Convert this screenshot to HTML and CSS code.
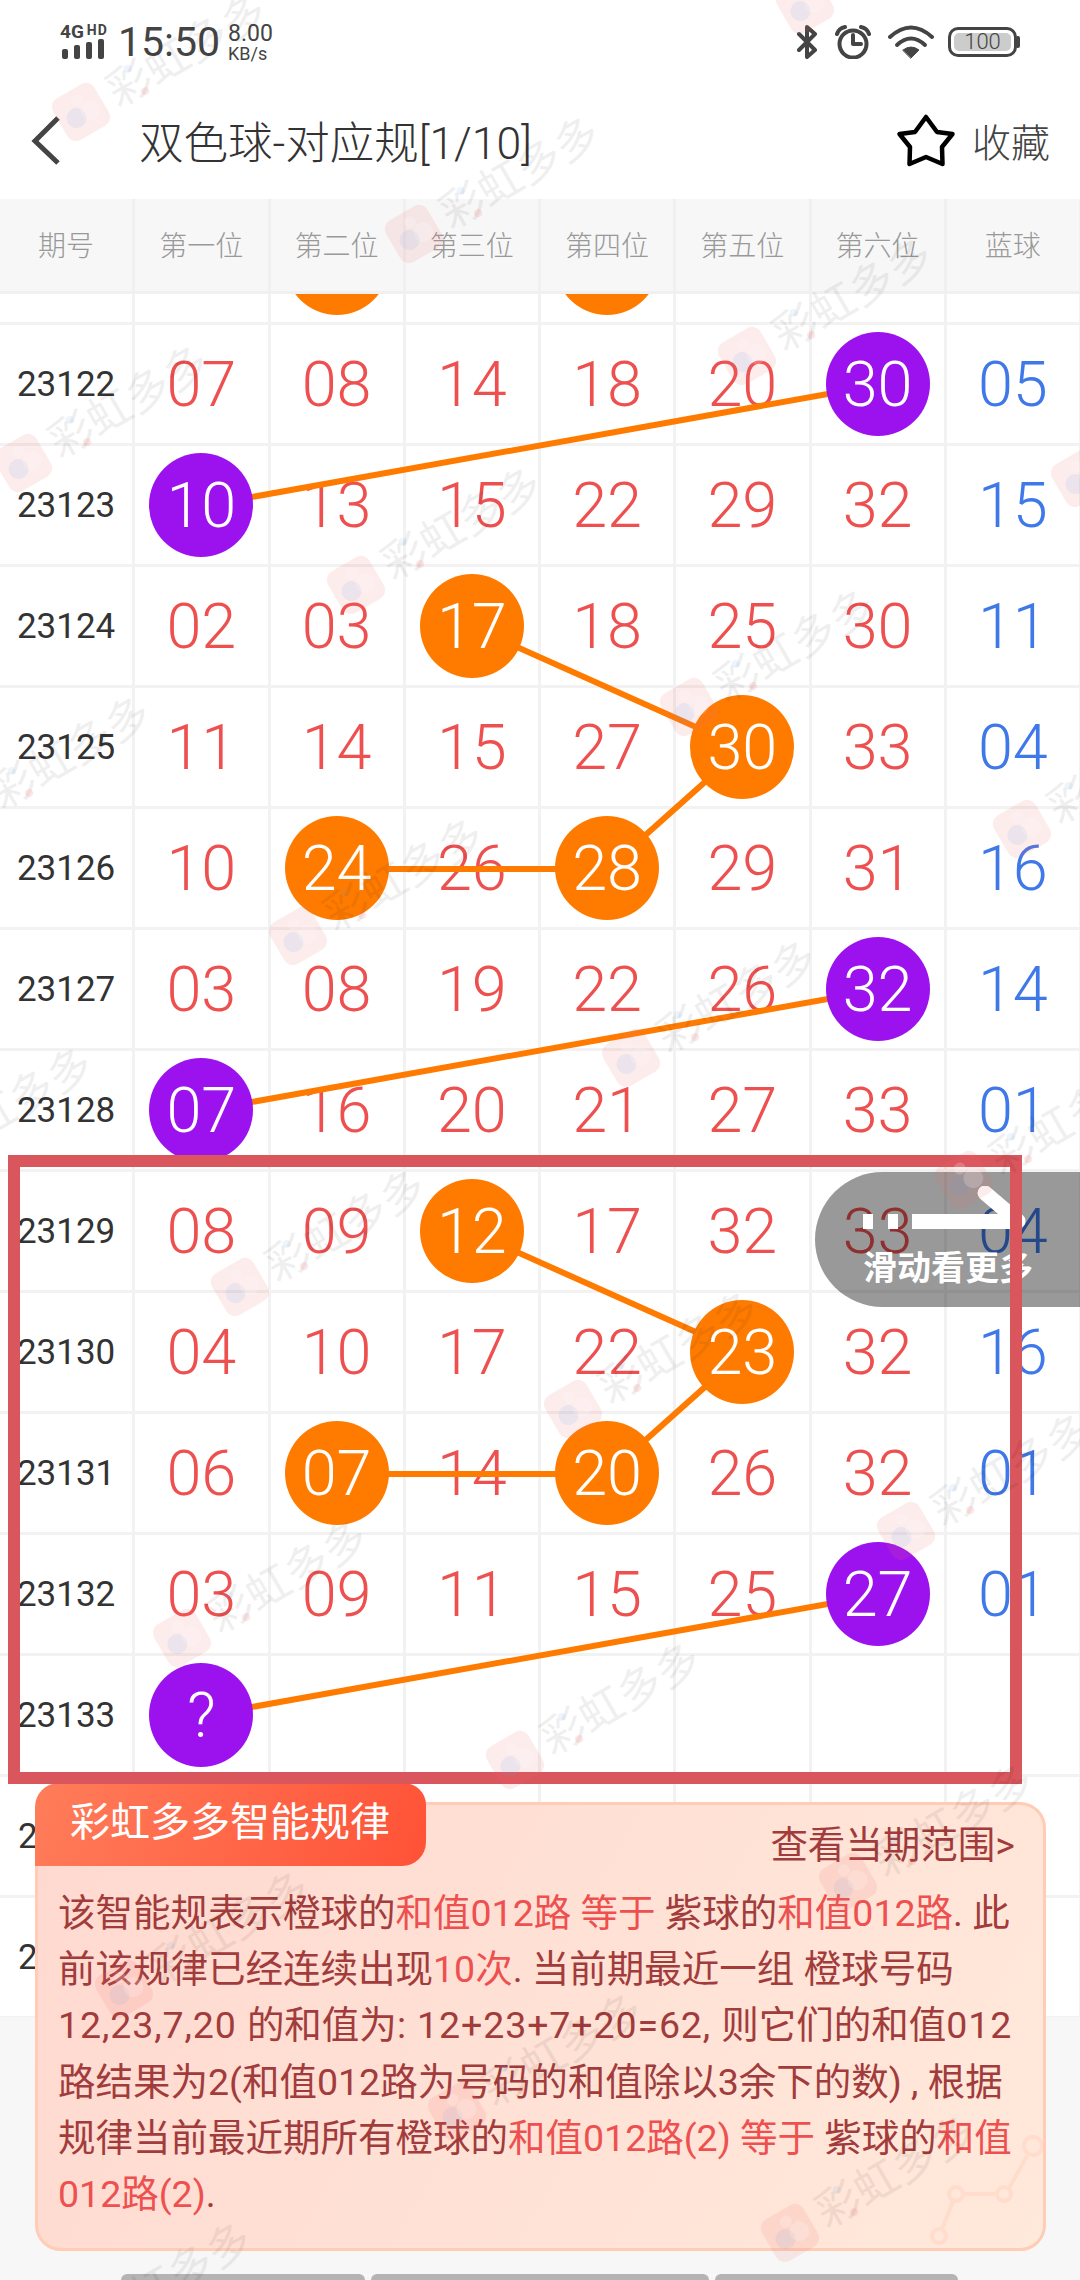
FILE: index.html
```html
<!DOCTYPE html>
<html lang="zh-CN">

<head>
    <meta charset="UTF-8">
    <meta name="viewport" content="width=device-width, initial-scale=1.0">
    <title>双色球-对应规</title>
    <link rel="stylesheet" href="styles.css">
</head>

<body>
    <div class="page">
        <!-- status bar -->
        <div class="status">
            <div class="net">
                <div class="net-label"><span class="net-4g">4G</span><span class="net-hd">HD</span></div>
                <div class="bars"><i class="b1"></i><i class="b2"></i><i class="b3"></i><i class="b4"></i></div>
            </div>
            <span class="clock">15:50</span>
            <div class="speed"><span class="speed-num">8.00</span><span class="speed-unit">KB/s</span></div>
            <div class="status-right">
                <svg class="ic-bt" width="22" height="34" viewBox="0 0 22 34"><path d="M3 9L19 25L11 32V2L19 9L3 25"/></svg>
                <svg class="ic-alarm" width="36" height="34" viewBox="0 0 36 34"><circle cx="18" cy="19" r="13.5"/><path d="M18 10V19H26"/><path d="M2 9Q4 3 10 2"/><path d="M26 2Q32 3 34 9"/></svg>
                <svg class="ic-wifi" width="46" height="34" viewBox="0 0 46 34"><path d="M2 12Q23 -7 44 12"/><path d="M9 20Q23 7 37 20"/><path class="fill" d="M15 25Q23 19 31 25L23 33Z"/></svg>
                <div class="battery"><div class="battery-in">100</div></div>
                <div class="battery-nub"></div>
            </div>
        </div>

        <!-- title bar -->
        <div class="nav">
            <svg class="back" width="30" height="50" viewBox="0 0 30 50"><path d="M27 3L4 26L27 48"/></svg>
            <h1 class="nav-title">双色球-对应规[1/10]</h1>
            <svg class="star" width="60" height="56" viewBox="0 0 60 56"><path d="M30 5L41 20L56.500 22L46 35L46.500 52L30 45L13.500 52L14 35L3.500 22L19 20Z"/></svg>
            <span class="nav-fav">收藏</span>
        </div>

        <!-- table head -->
        <div class="grid thead">
            <div class="th">期号</div>
            <div class="th">第一位</div>
            <div class="th">第二位</div>
            <div class="th">第三位</div>
            <div class="th">第四位</div>
            <div class="th">第五位</div>
            <div class="th">第六位</div>
            <div class="th">蓝球</div>
        </div>

        <!-- table body, scrolled so the first row is cut off by the head -->
        <div class="tbody">
            <svg class="links" width="1080" height="1723" viewBox="0 294 1080 1723">
                <path d="M878 385L201.500 506"/>
                <path d="M472 627L743 748L607.500 869H337"/>
                <path d="M878 990L201.500 1111"/>
                <path d="M472 1232L743 1353L607.500 1474H337"/>
                <path d="M878 1595L201.500 1716"/>
            </svg>
            <div class="rows">
                <div class="grid row"><div class="cell"></div><div class="cell"></div><div class="cell"><span class="ball orange"></span></div><div class="cell"></div><div class="cell"><span class="ball orange"></span></div><div class="cell"></div><div class="cell"></div><div class="cell"></div></div>
                <div class="grid row"><div class="cell id">23122</div><div class="cell">07</div><div class="cell">08</div><div class="cell">14</div><div class="cell">18</div><div class="cell">20</div><div class="cell"><span class="ball purple">30</span></div><div class="cell blue">05</div></div>
                <div class="grid row"><div class="cell id">23123</div><div class="cell"><span class="ball purple">10</span></div><div class="cell">13</div><div class="cell">15</div><div class="cell">22</div><div class="cell">29</div><div class="cell">32</div><div class="cell blue">15</div></div>
                <div class="grid row"><div class="cell id">23124</div><div class="cell">02</div><div class="cell">03</div><div class="cell"><span class="ball orange">17</span></div><div class="cell">18</div><div class="cell">25</div><div class="cell">30</div><div class="cell blue">11</div></div>
                <div class="grid row"><div class="cell id">23125</div><div class="cell">11</div><div class="cell">14</div><div class="cell">15</div><div class="cell">27</div><div class="cell"><span class="ball orange">30</span></div><div class="cell">33</div><div class="cell blue">04</div></div>
                <div class="grid row"><div class="cell id">23126</div><div class="cell">10</div><div class="cell"><span class="ball orange">24</span></div><div class="cell">26</div><div class="cell"><span class="ball orange">28</span></div><div class="cell">29</div><div class="cell">31</div><div class="cell blue">16</div></div>
                <div class="grid row"><div class="cell id">23127</div><div class="cell">03</div><div class="cell">08</div><div class="cell">19</div><div class="cell">22</div><div class="cell">26</div><div class="cell"><span class="ball purple">32</span></div><div class="cell blue">14</div></div>
                <div class="grid row"><div class="cell id">23128</div><div class="cell"><span class="ball purple">07</span></div><div class="cell">16</div><div class="cell">20</div><div class="cell">21</div><div class="cell">27</div><div class="cell">33</div><div class="cell blue">01</div></div>
                <div class="grid row"><div class="cell id">23129</div><div class="cell">08</div><div class="cell">09</div><div class="cell"><span class="ball orange">12</span></div><div class="cell">17</div><div class="cell">32</div><div class="cell">33</div><div class="cell blue">04</div></div>
                <div class="grid row"><div class="cell id">23130</div><div class="cell">04</div><div class="cell">10</div><div class="cell">17</div><div class="cell">22</div><div class="cell"><span class="ball orange">23</span></div><div class="cell">32</div><div class="cell blue">16</div></div>
                <div class="grid row"><div class="cell id">23131</div><div class="cell">06</div><div class="cell"><span class="ball orange">07</span></div><div class="cell">14</div><div class="cell"><span class="ball orange">20</span></div><div class="cell">26</div><div class="cell">32</div><div class="cell blue">01</div></div>
                <div class="grid row"><div class="cell id">23132</div><div class="cell">03</div><div class="cell">09</div><div class="cell">11</div><div class="cell">15</div><div class="cell">25</div><div class="cell"><span class="ball purple">27</span></div><div class="cell blue">01</div></div>
                <div class="grid row"><div class="cell id">23133</div><div class="cell"><span class="ball purple">?</span></div><div class="cell"></div><div class="cell"></div><div class="cell"></div><div class="cell"></div><div class="cell"></div><div class="cell"></div></div>
                <div class="grid row"><div class="cell id cut">2</div><div class="cell"></div><div class="cell"></div><div class="cell"></div><div class="cell"></div><div class="cell"></div><div class="cell"></div><div class="cell"></div></div>
                <div class="grid row"><div class="cell id cut">2</div><div class="cell"></div><div class="cell"></div><div class="cell"></div><div class="cell"></div><div class="cell"></div><div class="cell"></div><div class="cell"></div></div>
            </div>
        </div>

        <!-- bottom strip -->
        <div class="foot">
            <div class="foot-bar w1"></div>
            <div class="foot-bar w2"></div>
            <div class="foot-bar w3"></div>
        </div>

        <!-- swipe hint -->
        <div class="swipe">
            <svg class="swipe-arrow" width="164" height="64" viewBox="0 0 164 64"><rect x="0" y="28" width="10" height="15"/><rect x="25" y="28" width="10" height="15"/><rect x="49" y="28" width="100" height="15"/><path d="M122 7L155 35"/></svg>
            <span class="swipe-text">滑动看更多</span>
        </div>

        <!-- rule explanation -->
        <div class="rule">
            <div class="rule-tag">彩虹多多智能规律</div>
            <svg class="rule-deco" width="120" height="120" viewBox="0 0 120 120"><circle cx="16" cy="102" r="7"/><circle cx="33" cy="60" r="7"/><circle cx="81" cy="60" r="7"/><circle cx="110" cy="12" r="9"/><path d="M19 95L30 67M40 60H74M86 54L104 22"/></svg>
            <div class="rule-link">查看当期范围&gt;</div>
            <p class="rule-text">该智能规表示橙球的<em>和值012路 等于</em> 紫球的<em>和值012路</em>. 此<br>前该规律已经连续出现<em>10次</em>. 当前期最近一组 橙球号码<br><span class="num">12,23,7,20 </span>的和值为<span class="num">: 12+23+7+20=62, </span>则它们的和值<span class="num">012</span><br>路结果为2(和值012路为号码的和值除以3余下的数) , 根据<br>规律当前最近期所有橙球的<em>和值012路(2) 等于</em> 紫球的<em>和值</em><br><em>012路(2)</em>.</p>
        </div>

        <!-- red marker drawn over the shot -->
        <div class="frame"></div>

        <!-- watermark -->
        <svg class="watermark" width="1080" height="2280" viewBox="0 0 1080 2280">
            <defs>
                <g id="wm">
                    <rect class="wm-logo" x="-24" y="-24" width="48" height="48" rx="10"/>
                    <circle class="wm-blue" cx="-7" cy="3" r="10"/>
                    <circle class="wm-pale" cx="9" cy="3" r="10"/>
                    <circle class="wm-pale" cx="2" cy="-12" r="6"/>
                    <text class="wm-text" x="34" y="15">彩虹多多</text>
                    <circle class="wm-blue" cx="62" cy="-14" r="4"/>
                    <circle class="wm-red" cx="66" cy="14" r="4"/>
                </g>
            </defs>
            <use href="#wm" transform="translate(805 5) rotate(-30)"/>
            <use href="#wm" transform="translate(81 112) rotate(-30)"/>
            <use href="#wm" transform="translate(414 234) rotate(-30)"/>
            <use href="#wm" transform="translate(747 356) rotate(-30)"/>
            <use href="#wm" transform="translate(1080 478) rotate(-30)"/>
            <use href="#wm" transform="translate(23 463) rotate(-30)"/>
            <use href="#wm" transform="translate(356 585) rotate(-30)"/>
            <use href="#wm" transform="translate(689 707) rotate(-30)"/>
            <use href="#wm" transform="translate(1022 829) rotate(-30)"/>
            <use href="#wm" transform="translate(-35 814) rotate(-30)"/>
            <use href="#wm" transform="translate(298 936) rotate(-30)"/>
            <use href="#wm" transform="translate(631 1058) rotate(-30)"/>
            <use href="#wm" transform="translate(964 1180) rotate(-30)"/>
            <use href="#wm" transform="translate(-93 1165) rotate(-30)"/>
            <use href="#wm" transform="translate(240 1287) rotate(-30)"/>
            <use href="#wm" transform="translate(573 1409) rotate(-30)"/>
            <use href="#wm" transform="translate(906 1531) rotate(-30)"/>
            <use href="#wm" transform="translate(182 1638) rotate(-30)"/>
            <use href="#wm" transform="translate(515 1760) rotate(-30)"/>
            <use href="#wm" transform="translate(848 1882) rotate(-30)"/>
            <use href="#wm" transform="translate(124 1989) rotate(-30)"/>
            <use href="#wm" transform="translate(457 2111) rotate(-30)"/>
            <use href="#wm" transform="translate(790 2233) rotate(-30)"/>
            <use href="#wm" transform="translate(66 2340) rotate(-30)"/>
        </svg>
    </div>
</body>

</html>
```
FILE: styles.css
```css
/* base */

body {
    margin: 0;
    padding: 0;
    font-family: Roboto, "Noto Sans CJK SC", sans-serif;
    color: #333;
}

.page {
    position: relative;
    display: flex;
    flex-direction: column;
    width: 1080px;
    height: 2280px;
    overflow: hidden;
    background-color: #fff;
}

/* status bar */

.status {
    display: flex;
    align-items: center;
    height: 84px;
    padding-left: 60px;
    color: #444;
}

.net {
    display: flex;
    flex-direction: column;
    width: 60px;
}

.net-label {
    display: flex;
    align-items: flex-start;
    height: 14px;
    font-weight: 700;
    line-height: 14px;
}

.net-4g {
    font-size: 19px;
}

.net-hd {
    margin-left: 3px;
    font-size: 14px;
    line-height: 11px;
    letter-spacing: 1px;
}

.bars {
    display: flex;
    align-items: flex-end;
    gap: 6px;
    height: 20px;
    margin-left: 2px;
}

.bars i {
    display: block;
    width: 6px;
    border-radius: 2px;
    background-color: #444;
}

.b1 { height: 10px; }
.b2 { height: 14px; }
.b3 { height: 17px; }
.b4 { height: 20px; }

.clock {
    width: 110px;
    margin-left: -2px;
    font-size: 41px;
    line-height: 40px;
}

.speed {
    display: flex;
    flex-direction: column;
}

.speed-num {
    padding-top: 2px;
    font-size: 23px;
    line-height: 21px;
}

.speed-unit {
    font-size: 18px;
    line-height: 19px;
}

.status-right {
    display: flex;
    align-items: center;
    margin-left: auto;
    padding-right: 60px;
}

.status-right svg path,
.status-right svg circle {
    fill: none;
    stroke: #444;
    stroke-width: 4;
    stroke-linecap: round;
    stroke-linejoin: round;
}

.status-right svg path.fill {
    fill: #444;
    stroke-width: 1;
}

.ic-bt {
    margin-right: 17px;
}

.ic-alarm {
    margin-right: 17px;
}

.ic-wifi {
    margin-right: 14px;
}

.battery {
    box-sizing: border-box;
    width: 69px;
    height: 30px;
    padding: 3px;
    border: 3px solid #444;
    border-radius: 10px;
}

.battery-in {
    height: 18px;
    border-radius: 5px;
    background-color: #ccc;
    font-size: 22px;
    font-weight: 300;
    line-height: 18px;
    text-align: center;
}

.battery-nub {
    width: 3px;
    height: 12px;
    border-radius: 0 2px 2px 0;
    background-color: #444;
}

/* title bar */

.nav {
    display: flex;
    align-items: center;
    box-sizing: border-box;
    height: 115px;
    padding: 0 30px 4px 31px;
}

.back {
    margin-right: 78px;
}

.back path {
    fill: none;
    stroke: #444;
    stroke-width: 5;
}

.nav-title {
    margin: 0;
    font-size: 44.500px;
    font-weight: 300;
    color: #333;
}

.star {
    margin-left: auto;
    margin-right: 16px;
}

.star path {
    fill: none;
    stroke: #000;
    stroke-width: 4.5;
    stroke-linejoin: round;
}

.nav-fav {
    font-size: 39px;
    font-weight: 300;
    color: #444;
}

/* table */

.grid {
    display: grid;
    grid-template-columns: repeat(8, 135.25px);
}

.thead {
    position: relative;
    z-index: 3;
    height: 95px;
    background-color: #f7f7f7;
}

.th {
    display: flex;
    align-items: center;
    justify-content: center;
    padding-bottom: 3px;
    border-right: 3px solid #f0f0f0;
    border-bottom: 3px solid #f0f0f0;
    font-size: 28px;
    font-weight: 300;
    color: #999;
}

.tbody {
    position: relative;
    height: 1723px;
    overflow: hidden;
}

.links {
    position: absolute;
    top: 0;
    left: 0;
    z-index: 1;
}

.links path {
    fill: none;
    stroke: #ff7b00;
    stroke-width: 6;
}

.rows {
    margin-top: -90px;
}

.row {
    height: 121px;
}

.cell {
    display: flex;
    align-items: center;
    justify-content: center;
    border-right: 3px solid #f2f2f2;
    border-bottom: 3px solid #f2f2f2;
    font-size: 63px;
    font-weight: 300;
    color: #ee5050;
}

.cell.blue {
    color: #3f78e8;
}

.cell.id {
    font-size: 35px;
    font-weight: 400;
    color: #333;
}

.cell.cut {
    justify-content: flex-start;
    padding-left: 18px;
}

.ball {
    position: relative;
    z-index: 2;
    display: flex;
    flex: none;
    align-items: center;
    justify-content: center;
    width: 104px;
    height: 104px;
    border-radius: 50%;
    color: #fff;
}

.orange {
    background-color: #ff7b00;
}

.purple {
    background-color: #9b12ee;
}

/* bottom strip */

.foot {
    display: flex;
    flex: 1;
    align-items: flex-end;
    gap: 6px;
    padding-left: 121px;
    background-color: #f7f7f7;
}

.foot-bar {
    height: 6px;
    border-radius: 6px 6px 0 0;
    background-color: #b4b4b4;
}

.w1 { width: 244px; }
.w2 { width: 338px; }
.w3 { width: 243px; }

/* swipe hint */

.swipe {
    position: absolute;
    top: 1172px;
    left: 815px;
    z-index: 5;
    box-sizing: border-box;
    width: 265px;
    height: 135px;
    padding: 14px 0 0 48px;
    border-radius: 68px 0 0 68px;
    background-color: rgba(0, 0, 0, 0.4);
}

.swipe-arrow {
    display: block;
}

.swipe-arrow rect {
    fill: #fff;
}

.swipe-arrow path {
    fill: none;
    stroke: #fff;
    stroke-width: 15;
    stroke-linecap: round;
}

.swipe-text {
    display: block;
    width: 180px;
    font-size: 34px;
    font-weight: 700;
    line-height: 36px;
    color: #fff;
}

/* rule card */

.rule {
    position: absolute;
    top: 1802px;
    left: 35px;
    z-index: 4;
    box-sizing: border-box;
    width: 1011px;
    height: 449px;
    padding-top: 18px;
    border: 3px solid #ffcdb6;
    border-radius: 26px;
    background: linear-gradient(120deg, #ffd9d0, #ffe9da);
}

.rule-tag {
    position: absolute;
    top: -22px;
    left: -3px;
    box-sizing: border-box;
    width: 391px;
    height: 83px;
    padding-left: 35px;
    border-radius: 24px 22px 24px 0;
    background: linear-gradient(110deg, #ff7d5a, #ff5237);
    font-size: 40px;
    line-height: 79px;
    color: #fff;
}

.rule-deco {
    position: absolute;
    right: 0;
    bottom: -6px;
}

.rule-deco circle,
.rule-deco path {
    fill: none;
    stroke: #ffdccb;
    stroke-width: 4;
}

.rule-link {
    position: relative;
    height: 44px;
    padding-right: 28px;
    font-size: 37.500px;
    line-height: 44px;
    color: #a23c3c;
    text-align: right;
}

.rule-text {
    position: relative;
    margin: 18px 0 0 20px;
    font-size: 37.500px;
    line-height: 56.200px;
    color: #a23c3c;
    white-space: nowrap;
}

.rule-text em {
    font-style: normal;
    color: #ee5050;
}

.num {
    letter-spacing: 0.900px;
}

/* marker */

.frame {
    position: absolute;
    top: 1155px;
    left: 8px;
    z-index: 6;
    box-sizing: border-box;
    width: 1014px;
    height: 629px;
    border: 12px solid #d9565c;
}

/* watermark */

.watermark {
    position: absolute;
    top: 0;
    left: 0;
    z-index: 7;
    pointer-events: none;
}

.wm-text {
    font-size: 44px;
    fill: #000;
    opacity: 0.06;
}

.wm-logo {
    fill: #f26a6a;
    opacity: 0.13;
}

.wm-blue {
    fill: #5aa0ea;
    opacity: 0.1;
}

.wm-red {
    fill: #f26a6a;
    opacity: 0.16;
}

.wm-pale {
    fill: #fff;
    opacity: 0.2;
}
```
